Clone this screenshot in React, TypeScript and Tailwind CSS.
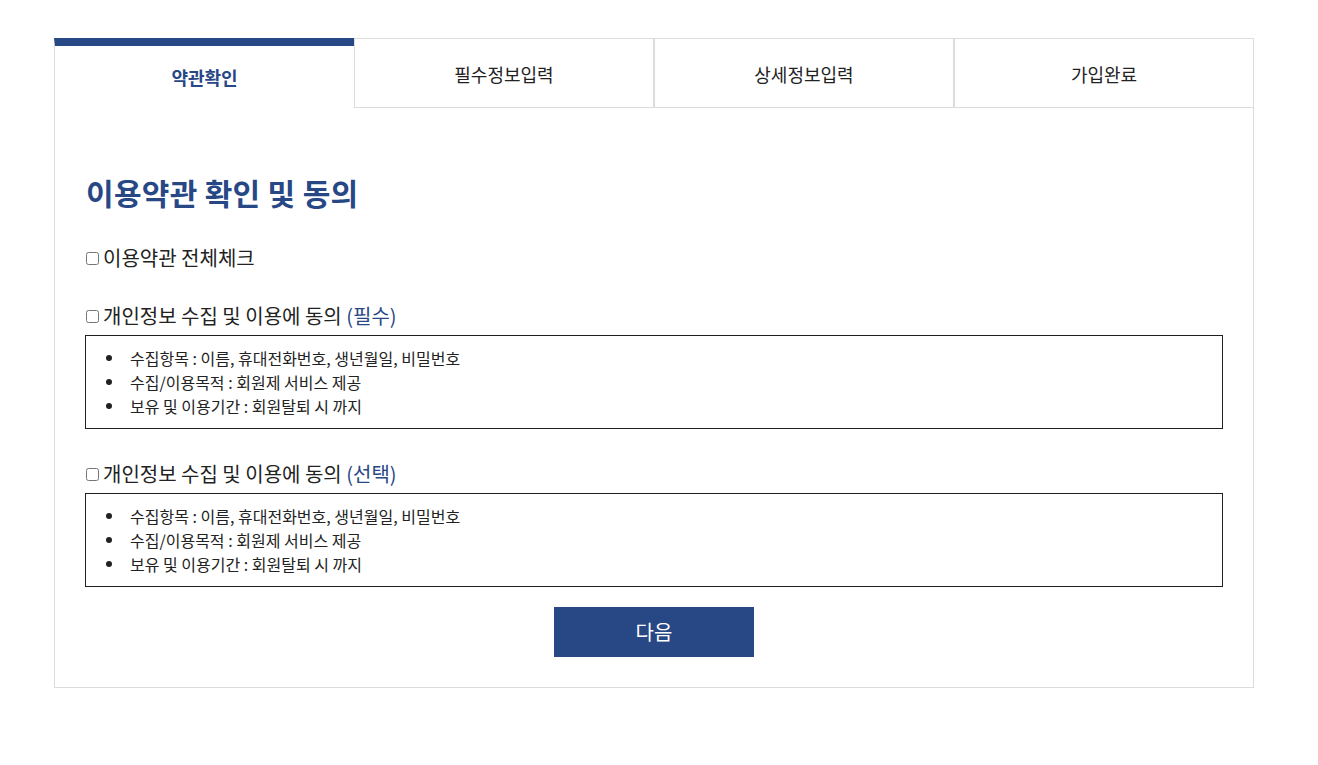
const tabs = ["약관확인", "필수정보입력", "상세정보입력", "가입완료"];

const items = [
  "수집항목 : 이름, 휴대전화번호, 생년월일, 비밀번호",
  "수집/이용목적 : 회원제 서비스 제공",
  "보유 및 이용기간 : 회원탈퇴 시 까지",
];

function AgreeBlock({ label, tag }: { label: string; tag: string }) {
  return (
    <div>
      <label className="flex items-center gap-[4px] text-[20px] leading-[28px] text-[#222]">
        <input type="checkbox" className="w-[13px] h-[13px] m-0" />
        <span>
          {label} <span className="text-[#284785]">({tag})</span>
        </span>
      </label>
      <div className="-mx-[1px] mt-[5px] border border-[#231f20] py-[10px]">
        <ul className="pl-[20px] text-[16px] leading-[24px] text-[#222]">
          {items.map((t) => (
            <li key={t} className="flex items-center">
              <span className="w-[6px] h-[6px] rounded-full bg-[#222] mr-[18px]" />
              {t}
            </li>
          ))}
        </ul>
      </div>
    </div>
  );
}

export default function App() {
  return (
    <div
      className="min-h-[765px] bg-white pt-[38px]"
      style={{ fontFamily: '"Noto Sans CJK KR", "Noto Sans", sans-serif' }}
    >
      <div className="ml-[54px] w-[1200px]">
        <ul className="flex">
          {tabs.map((t, i) =>
            i === 0 ? (
              <li
                key={t}
                className="w-[300px] h-[70px] border-t-[8px] border-t-[#284785] border-l border-l-[#dcdcdc] flex items-center justify-center text-[18px] font-bold text-[#284785]"
              >
                {t}
              </li>
            ) : (
              <li
                key={t}
                className="w-[300px] h-[70px] border border-[#dcdcdc] pt-[3px] flex items-center justify-center text-[18px] text-[#222]"
              >
                {t}
              </li>
            )
          )}
        </ul>
        <div className="border border-t-0 border-[#dcdcdc] px-[31px] pt-[63px] pb-[30px]">
          <h2 className="text-[30px] leading-[42px] font-bold text-[#284785] tracking-[0.3px]">
            이용약관 확인 및 동의
          </h2>
          <label className="mt-[31px] flex items-center gap-[4px] text-[20px] leading-[28px] text-[#222]">
            <input type="checkbox" className="w-[13px] h-[13px] m-0" />
            <span>이용약관 전체체크</span>
          </label>
          <div className="mt-[30px]">
            <AgreeBlock label="개인정보 수집 및 이용에 동의" tag="필수" />
          </div>
          <div className="mt-[31px]">
            <AgreeBlock label="개인정보 수집 및 이용에 동의" tag="선택" />
          </div>
          <div className="mt-[20px] flex justify-center">
            <button className="w-[200px] h-[50px] bg-[#284785] text-white text-[20px]">
              다음
            </button>
          </div>
        </div>
      </div>
    </div>
  );
}
